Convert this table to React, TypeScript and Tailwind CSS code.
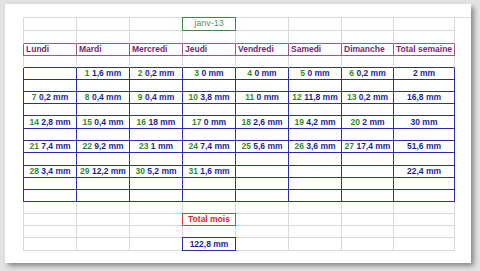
const font = { fontFamily: '"Liberation Sans", Arial, sans-serif' };

const widths = ["w-[53px]", "w-[53px]", "w-[53px]", "w-[53px]", "w-[53px]", "w-[53px]", "w-[52px]", "w-[61px]"];
const days = ["Lundi", "Mardi", "Mercredi", "Jeudi", "Vendredi", "Samedi", "Dimanche", "Total semaine"];

// [day, value] per cell, null = empty
type Entry = [string, string] | null;
const weeks: { cells: Entry[]; total: string }[] = [
  { cells: [null, ["1", "1,6 mm"], ["2", "0,2 mm"], ["3", "0 mm"], ["4", "0 mm"], ["5", "0 mm"], ["6", "0,2 mm"]], total: "2 mm" },
  { cells: [["7", "0,2 mm"], ["8", "0,4 mm"], ["9", "0,4 mm"], ["10", "3,8 mm"], ["11", "0 mm"], ["12", "11,8 mm"], ["13", "0,2 mm"]], total: "16,8 mm" },
  { cells: [["14", "2,8 mm"], ["15", "0,4 mm"], ["16", "18 mm"], ["17", "0 mm"], ["18", "2,6 mm"], ["19", "4,2 mm"], ["20", "2 mm"]], total: "30 mm" },
  { cells: [["21", "7,4 mm"], ["22", "9,2 mm"], ["23", "1 mm"], ["24", "7,4 mm"], ["25", "5,6 mm"], ["26", "3,6 mm"], ["27", "17,4 mm"]], total: "51,6 mm" },
  { cells: [["28", "3,4 mm"], ["29", "12,2 mm"], ["30", "5,2 mm"], ["31", "1,6 mm"], null, null, null], total: "22,4 mm" },
];

function GrayRow({ h, top, bottom, children }: { h: string; top?: boolean; bottom?: string; children?: (i: number) => React.ReactNode }) {
  return (
    <div className={`flex border-l border-[#d9d9d9] ${top ? "border-t" : ""}`}>
      {widths.map((w, i) => (
        <div key={i} className={`${w} ${h} relative border-r border-b border-r-[#d9d9d9] ${bottom ?? "border-b-[#d9d9d9]"}`}>
          {children?.(i)}
        </div>
      ))}
    </div>
  );
}

function BlueRow({ h, children }: { h: string; children?: (i: number) => React.ReactNode }) {
  return (
    <div className="flex border-l border-[#2c2cb0]">
      {widths.map((w, i) => (
        <div key={i} className={`${w} ${h} flex items-center justify-center border-r border-b border-[#2c2cb0] text-[8.5px] font-bold text-[#1e1e9c] whitespace-nowrap`}>
          {children?.(i)}
        </div>
      ))}
    </div>
  );
}

function Box({ color, children }: { color: string; children: React.ReactNode }) {
  return <div className={`absolute -inset-px flex items-center justify-center border ${color}`}>{children}</div>;
}

export default function App() {
  return (
    <div className="w-[480px] h-[271px] bg-[#e3e3e3] pt-[4px] pl-[5px] overflow-hidden" style={font}>
      <div className="w-[466px] h-[259px] bg-white pt-[13px] pl-[18px] shadow-[3px_3px_5px_rgba(0,0,0,0.4)]">
        <GrayRow h="h-[13px]" top>
          {(i) => i === 3 && <Box color="border-[#3c8c3c]"><span className="text-[9px] text-[#5f8f5f]">janv-13</span></Box>}
        </GrayRow>
        <GrayRow h="h-[13px]" bottom="border-b-[#a0587a]" />
        <div className="flex border-l border-[#a0587a]">
          {widths.map((w, i) => (
            <div key={i} className={`${w} h-[12px] flex items-center pl-[2px] border-r border-b border-[#a0587a] text-[8.5px] font-bold text-[#7c1f6e] whitespace-nowrap`}>
              {days[i]}
            </div>
          ))}
        </div>
        <GrayRow h="h-[12px]" bottom="border-b-[#2c2cb0]" />
        {weeks.map((wk, k) => {
          const hs = [["h-[12px]", "h-[12px]"], ["h-[12px]", "h-[12px]"], ["h-[13px]", "h-[12px]"], ["h-[12px]", "h-[13px]"], ["h-[12px]", "h-[12px]"]][k];
          return (
            <div key={k}>
              <BlueRow h={hs[0]}>
                {(i) => {
                  if (i === 7) return wk.total;
                  const c = wk.cells[i];
                  return c && (
                    <>
                      <span className="text-[#2f8a2f]">{c[0]}</span>&nbsp;{c[1]}
                    </>
                  );
                }}
              </BlueRow>
              <BlueRow h={hs[1]} />
            </div>
          );
        })}
        <BlueRow h="h-[12px]" />
        <GrayRow h="h-[12px]" />
        <GrayRow h="h-[12px]">
          {(i) => i === 3 && <Box color="border-[#e03c3c]"><span className="text-[8.5px] font-bold text-[#d32b2b]">Total mois</span></Box>}
        </GrayRow>
        <GrayRow h="h-[12px]" />
        <GrayRow h="h-[13px]">
          {(i) => i === 3 && <Box color="border-[#2c2cb0]"><span className="text-[8.5px] font-bold text-[#1e1e9c]">122,8 mm</span></Box>}
        </GrayRow>
      </div>
    </div>
  );
}
